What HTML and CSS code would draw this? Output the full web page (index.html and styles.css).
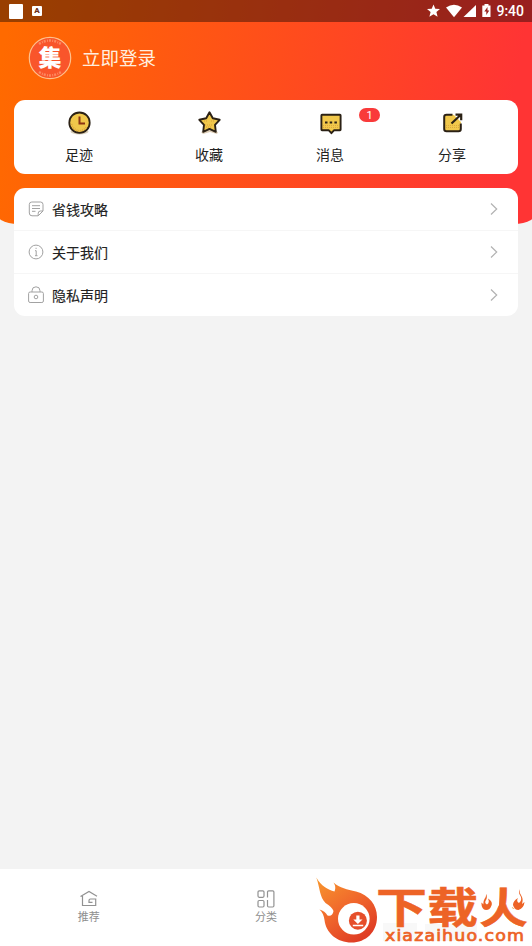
FILE: index.html
```html
<!DOCTYPE html>
<html lang="zh-CN">
<head>
<meta charset="utf-8">
<title>我的</title>
<link rel="stylesheet" href="styles.css">
</head>
<body>
<div class="screen">
  <div class="hero-bg"></div>
  <header class="status">
    <div class="status-left">
      <span class="blank-tile"></span>
      <span class="app-tile">A</span>
    </div>
    <div class="status-right">
      <svg class="status-icons" width="66" height="16" viewBox="0 0 66 16" fill="#fff">
        <path d="M7.500 1.500l1.800 4.200 4.700.4-3.600 3 1.200 4.600-4.100-2.500-4.100 2.500 1.200-4.600L1 6.100l4.700-.4z"/>
        <path d="M20 4.500Q28 -1 36 4.500L28 14.200z"/>
        <path d="M50 2v12H37.500z"/>
        <path fill-rule="evenodd" d="M58.500 1h4v1.500h2V14h-8.200V2.500h2.200zM61.500 4l-3.200 4.500h2v3.500l3-4.600h-1.800z"/>
      </svg>
      <span class="time">9:40</span>
    </div>
  </header>
  <section class="profile">
    <div class="avatar">
      <svg width="44" height="44" viewBox="0 0 44 44" fill="none">
        <circle cx="22" cy="22" r="20.700" fill="#f9552b" stroke="#ffc08c" stroke-width="1.200"/>
        <path d="M11 8q11-7 22 0M11 36q11 7 22 0" stroke="#ffa57c" stroke-width="2.500" stroke-dasharray="2 1.300 1 1" opacity=".65"/>
        <text x="22" y="30" text-anchor="middle" class="avatar-char">集</text>
      </svg>
    </div>
    <span class="login">立即登录</span>
  </section>
  <section class="card shortcuts">
    <div class="shortcut">
      <svg width="26" height="26" viewBox="0 0 26 26" fill="none">
        <ellipse cx="13.500" cy="21.500" rx="9" ry="3" fill="#d9d0bc"/>
        <circle cx="13.500" cy="12.700" r="10.200" fill="#f1c84b" stroke="#2b2115" stroke-width="1.800"/>
        <path d="M5.500 14a8.200 8.200 0 0 0 15 3" stroke="#dca83e" stroke-width="2" stroke-dasharray="1 1"/>
        <path d="M13.500 6.500v7H19" stroke="#8c3514" stroke-width="2"/>
      </svg>
      <span>足迹</span>
    </div>
    <div class="shortcut">
      <svg width="26" height="26" viewBox="0 0 26 26" fill="none">
        <path d="M5 22l8-3 9 3-1 2-7-2-7 2z" fill="#dcccb5"/>
        <path d="M13.500 2.300l3.300 6 6.900 1.500-4.700 5 .8 7-6.300-2.900-6.300 2.900.8-7-4.700-5 6.900-1.500z" fill="#f1c84b" stroke="#2b2115" stroke-width="1.900" stroke-linejoin="round"/>
        <path d="M9 15h8M10 17h6M8 11h3M15 11h4" stroke="#d99f36" stroke-dasharray="1 1"/>
      </svg>
      <span>收藏</span>
    </div>
    <div class="shortcut">
      <svg width="26" height="26" viewBox="0 0 26 26" fill="none">
        <path d="M5 4.800q-.6 0-.6.600v14.200q0 .600.600.600h6.600l2.800 3 2.800-3h5.800q.6 0 .6-.600V5.400q0-.600-.6-.600z" fill="#f1c84b" stroke="#2b2115" stroke-width="1.900" stroke-linejoin="round"/>
        <path d="M6 17.500h16M6 15.500h16" stroke="#dca83e" stroke-dasharray="1 1"/>
        <path d="M8 12.500h2.500M12.700 12.500h2.500M17.400 12.500h2.500" stroke="#2b2115" stroke-width="2.200"/>
      </svg>
      <span>消息</span>
      <b class="badge">1</b>
    </div>
    <div class="shortcut">
      <svg width="26" height="26" viewBox="0 0 26 26" fill="none">
        <path d="M14 4.800H7.500Q5.200 4.800 5.200 7v12q0 2.300 2.300 2.300h12q2.300 0 2.300-2.300v-6z" fill="#f1c84b"/>
        <path d="M13.500 4.800H7.500Q5.200 4.800 5.200 7v12q0 2.300 2.300 2.300h12q2.300 0 2.300-2.300v-5.500" stroke="#2b2115" stroke-width="2"/>
        <path d="M14 5.500l7.500 7.500" stroke="#f1c84b" stroke-width="2"/>
        <path d="M7 17.500h13M7 15.500h13" stroke="#dca83e" stroke-dasharray="1 1"/>
        <path d="M12.500 13.500L21 5.500M16.500 4.700h5.700v5.500" stroke="#2b2115" stroke-width="2.200"/>
      </svg>
      <span>分享</span>
    </div>
  </section>
  <section class="card menu">
    <div class="row">
      <svg class="row-icon" width="16" height="16" viewBox="0 0 16 16">
        <path d="M10 14.800H4Q1.300 14.800 1.300 12V3.500Q1.300 1 3.800 1h8.700Q15 1 15 3.500V10l-4.800 4.800v-2.600Q10.200 10 12.500 10H15M4 4.700h8M4 7.500h8M4 10.300h3.500"/>
      </svg>
      <span class="row-label">省钱攻略</span>
      <svg class="arrow" width="10" height="14" viewBox="0 0 10 14"><path d="M2 1.500L7.700 7 2 12.500"/></svg>
    </div>
    <div class="row">
      <svg class="row-icon" width="16" height="16" viewBox="0 0 16 16">
        <circle cx="8" cy="8" r="6.900"/><path d="M7 6.700h1.200v5M7 11.700h2.500M7.500 4.300h1.200"/>
      </svg>
      <span class="row-label">关于我们</span>
      <svg class="arrow" width="10" height="14" viewBox="0 0 10 14"><path d="M2 1.500L7.700 7 2 12.500"/></svg>
    </div>
    <div class="row">
      <svg class="row-icon" width="16" height="18" viewBox="0 0 16 18">
        <rect x=".6" y="6" width="14.800" height="10.500" rx="1.500"/><path d="M4 6V4.800Q4 .8 8 .8t4 4V6"/><circle cx="8" cy="11" r="1.800"/>
      </svg>
      <span class="row-label">隐私声明</span>
      <svg class="arrow" width="10" height="14" viewBox="0 0 10 14"><path d="M2 1.500L7.700 7 2 12.500"/></svg>
    </div>
  </section>
  <nav class="tabs">
    <div class="tab">
      <svg width="20" height="20" viewBox="0 0 20 20">
        <path d="M1.500 7.500L10 2.500l8 4.700M3.500 7v9.500h13.200V10h-5.200q-1.500 0-1.500 1.500v1.800h3.500"/>
      </svg>
      <span>推荐</span>
    </div>
    <div class="tab">
      <svg width="20" height="20" viewBox="0 0 20 20">
        <rect x="2" y="1.800" width="6" height="6.500" rx="1.200"/><rect x="2" y="11.500" width="6" height="6.500" rx="1.200"/><path d="M11.500 8.500V3q0-1.200 1.200-1.200h4q1.200 0 1.200 1.200v13.800q0 1.200-1.200 1.200h-4q-1.200 0-1.200-1.200V11"/>
      </svg>
      <span>分类</span>
    </div>
    <div class="tab"></div>
  </nav>
  <svg class="site-mark" width="222" height="76" viewBox="310 870 222 76">
    <defs>
      <linearGradient id="flame" x1="0" y1="0" x2=".65" y2="1">
        <stop offset="0" stop-color="#f8982d"/><stop offset=".55" stop-color="#f0662c"/><stop offset="1" stop-color="#df3d24"/>
      </linearGradient>
    </defs>
    <path d="M383 923h34v18h-34zM425 924h52v17h-52z" fill="#f8f8f8"/>
    <path d="M316.300 877.500C321 886 328 889.500 334.500 891.500Q336.500 887 333.500 882.500C340 888 347 889.500 356 891.500C369 895 377 905 377 917C377 932 366 942.500 351.500 942.500C337 942.500 326 933 324.500 920Q323.500 913 319.500 909.500Q325 911 327.500 915.500Q332.500 917 333.500 911Q332 907 325.500 903C319.500 897 320 888 316.300 877.500z" fill="url(#flame)"/>
    <circle cx="353.800" cy="918.800" r="15.800" fill="#fff"/>
    <circle cx="357.900" cy="920.700" r="9" fill="#e64e2a"/>
    <path d="M356.300 915.500h3.200v4h3l-4.600 4.600-4.600-4.600h3zM352.800 924.700h10.400v1.500h-10.400z" fill="#fff"/>
    <text class="mark-name" x="376" y="922.700" textLength="102" lengthAdjust="spacingAndGlyphs">下载</text>
    <text class="mark-name" x="479" y="922.700" textLength="49" lengthAdjust="spacingAndGlyphs">火</text>
    <path d="M479 890h20v15l-4 6h-16zM508 887h20v23h-12l-8-6z" fill="#fff"/>
    <path d="M486 893.500q2 4-.5 7.500-1 2.500 1.500 3.500 3-1.500 1-6 5 3 3.500 7-1.500 4.500-5.500 4.500-5-1-4.500-7.500l2 2q-.5-3 1-5.500 2-2.500 1.500-5.500zM519.500 889q-1.500 3.500 1 7 2 4.500-1.500 7-3-1.500-1-5-5 3-5 7 1.500 5 5.500 5 5.500-2 6-8l-2.500 2q1.500-5-.5-8-2.500-3-2-7z" fill="#ed6326"/>
    <text class="mark-url" x="385" y="941" textLength="140" lengthAdjust="spacingAndGlyphs">xiazaihuo.com</text>
  </svg>
</div>
</body>
</html>
```
FILE: styles.css
```css
* { box-sizing: border-box; }
body {
  margin: 0;
  background: #f3f3f3;
  color: #222;
  font-family: Roboto, "Noto Sans CJK SC", sans-serif;
}
.screen {
  position: relative;
  display: flex;
  flex-direction: column;
  height: 946px;
  overflow: hidden;
}
.hero-bg {
  position: absolute;
  z-index: -1;
  top: 0;
  left: -6px;
  right: -6px;
  height: 224px;
  border-radius: 0 0 24px 24px / 0 0 14px 14px;
  background: linear-gradient(100deg, #ff6a00 3%, #ff3434 92%);
}
.status {
  display: flex;
  justify-content: space-between;
  align-items: center;
  height: 22px;
  padding: 0 8px 0 9px;
  background: rgba(0, 0, 0, .4);
}
.status-left, .status-right { display: flex; align-items: center; }
.status-left { gap: 9px; }
.blank-tile { width: 14px; height: 15px; border-radius: 1px; background: #fff; }
.app-tile {
  width: 10px;
  height: 10px;
  border-radius: 1px;
  background: #fff;
  color: #6b3018;
  font-size: 8px;
  font-weight: 900;
  line-height: 10px;
  text-align: center;
}
.status-right { gap: 4px; }
.time { color: #fff; font-size: 14px; font-weight: 500; line-height: 22px; }
.profile {
  display: flex;
  align-items: center;
  gap: 10px;
  height: 44px;
  margin: 14px 0 20px 28px;
}
.avatar { width: 44px; height: 44px; }
.avatar-char { font: 900 23px "Noto Sans CJK SC", sans-serif; fill: #fff; }
.login { padding-top: 1px; color: #ffeedf; font-size: 18.5px; line-height: 26px; }
.card { margin: 0 14px; border-radius: 11px; background: #fff; }
.shortcuts {
  display: grid;
  grid-template-columns: 130px 130px 112px 132px;
  height: 74px;
}
.shortcut {
  position: relative;
  display: flex;
  flex-direction: column;
  align-items: center;
  gap: 9px;
  padding-top: 10px;
  font-size: 14px;
  line-height: 20px;
}
.badge {
  position: absolute;
  top: 8px;
  left: 85px;
  width: 21px;
  height: 14px;
  border-radius: 7px;
  background: #f93a3a;
  color: #fff;
  font-size: 11px;
  font-weight: 400;
  line-height: 15px;
  text-align: center;
}
.menu { margin-top: 14px; height: 128px; }
.row {
  display: flex;
  align-items: center;
  height: 43px;
  padding: 0 19px 0 14px;
  border-bottom: 1px solid #f6f6f6;
}
.row:last-child { height: 42px; border: 0; }
.row-icon { fill: none; stroke: #a2a2a2; stroke-width: 1; }
.row-label {
  flex: 1;
  margin-left: 8px;
  padding-top: 2px;
  font-size: 14px;
  line-height: 20px;
  -webkit-text-stroke: .15px #222;
}
.arrow { fill: none; stroke: #b2b2b2; stroke-width: 1.2; }
.tabs {
  display: grid;
  grid-template-columns: repeat(3, 1fr);
  height: 77px;
  margin-top: auto;
  background: #fff;
}
.tab {
  display: flex;
  flex-direction: column;
  align-items: center;
  gap: 1px;
  padding-top: 20px;
  color: #8e8e8e;
  font-size: 11px;
  line-height: 16px;
}
.tab svg { fill: none; stroke: #929292; stroke-width: 1.2; }
.site-mark { position: absolute; right: 0; bottom: 0; }
.mark-name {
  font: 700 42px "Noto Sans CJK SC", sans-serif;
  fill: #ed6326;
  stroke: #ed6326;
  stroke-width: .5px;
}
.mark-url {
  font: 400 15.5px "DejaVu Sans", sans-serif;
  letter-spacing: 1px;
  fill: #ed6326;
  stroke: #ed6326;
  stroke-width: .7px;
}
```
